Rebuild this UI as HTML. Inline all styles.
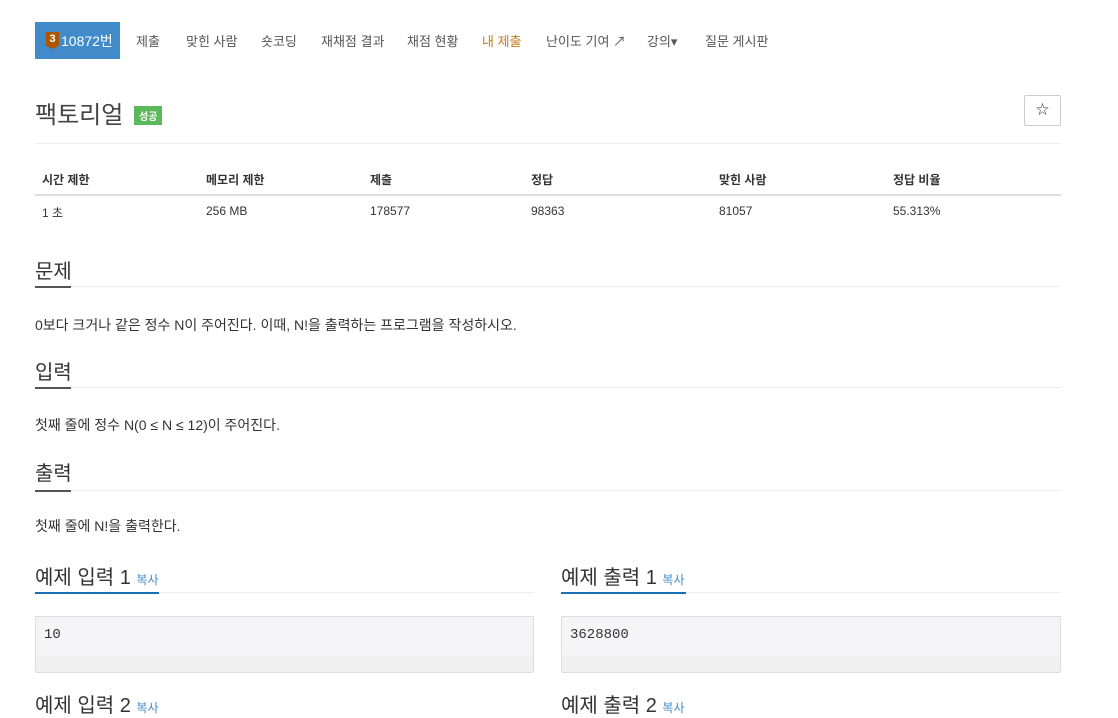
<!DOCTYPE html>
<html><head><meta charset="utf-8"><style>
*{margin:0;padding:0;box-sizing:border-box}
body{width:1118px;height:702px;overflow:hidden;background:#fff;font-family:"Liberation Sans","Noto Sans CJK KR",sans-serif;color:#333;font-size:14px;position:relative}
.a{position:absolute;white-space:nowrap}
.nav{font-size:13px;color:#555;top:31px}
.brand{position:absolute;left:35px;top:22px;width:85px;height:37px;background:#428bca;color:#fff;font-size:14px}
.badge{position:absolute;left:11px;top:10px;width:13px;height:17px;background:#ad5600;color:#fff;font-size:11px;font-weight:bold;text-align:center;line-height:14px;clip-path:polygon(0 0,100% 0,100% 80%,50% 100%,0 80%)}
.h{font-size:20px;color:#333}
.line{position:absolute;height:1px;background:#eee}
.ul{position:absolute;height:2px;background:#555}
.th{font-size:12px;font-weight:bold;top:171px}
.td{font-size:12px;top:204px}
.pre{position:absolute;top:616px;height:57px;background:#f5f5f7;border:1px solid #ddd;border-radius:2px}
.pre span{position:absolute;left:8px;top:10px;font-family:"Liberation Mono",monospace;font-size:14px;color:#333}
.pre i{position:absolute;left:0;right:0;bottom:0;height:17px;background:#f0f0f0}
</style></head><body>
<div class="brand"><div class="badge">3</div><span class="a" style="left:26px;top:9px">10872번</span></div>
<span class="a nav" style="left:136px">제출</span>
<span class="a nav" style="left:186px">맞힌 사람</span>
<span class="a nav" style="left:261px">숏코딩</span>
<span class="a nav" style="left:321px">재채점 결과</span>
<span class="a nav" style="left:407px">채점 현황</span>
<span class="a nav" style="left:482px;color:#c47a1b">내 제출</span>
<span class="a nav" style="left:546px">난이도 기여 ↗</span>
<span class="a nav" style="left:647px">강의▾</span>
<span class="a nav" style="left:705px">질문 게시판</span>
<span class="a" style="left:35px;top:95px;font-size:24px;color:#444">팩토리얼</span>
<span class="a" style="left:134px;top:106px;background:#5cb85c;color:#fff;font-size:10px;padding:2px 5px;font-weight:bold">성공</span>
<div class="a" style="left:1024px;top:95px;width:37px;height:31px;border:1px solid #ccc;border-radius:2px;text-align:center;line-height:28px;font-size:13px">☆</div>
<div class="line" style="left:35px;width:1026px;top:143px"></div>
<span class="a th" style="left:42px">시간 제한</span><span class="a th" style="left:206px">메모리 제한</span><span class="a th" style="left:370px">제출</span><span class="a th" style="left:531px">정답</span><span class="a th" style="left:719px">맞힌 사람</span><span class="a th" style="left:893px">정답 비율</span>
<div class="line" style="left:35px;width:1026px;top:194px;height:2px;background:#ddd"></div>
<span class="a td" style="left:42px">1 초</span><span class="a td" style="left:206px">256 MB</span><span class="a td" style="left:370px">178577</span><span class="a td" style="left:531px">98363</span><span class="a td" style="left:719px">81057</span><span class="a td" style="left:893px">55.313%</span>
<span class="a h" style="left:35px;top:255px">문제</span><div class="line" style="left:35px;width:1026px;top:286px"></div><div class="ul" style="left:35px;width:36px;top:286px"></div>
<span class="a" style="left:35px;top:315px">0보다 크거나 같은 정수 N이 주어진다. 이때, N!을 출력하는 프로그램을 작성하시오.</span>
<span class="a h" style="left:35px;top:356px">입력</span><div class="line" style="left:35px;width:1026px;top:387px"></div><div class="ul" style="left:35px;width:36px;top:387px"></div>
<span class="a" style="left:35px;top:415px">첫째 줄에 정수 N(0 ≤ N ≤ 12)이 주어진다.</span>
<span class="a h" style="left:35px;top:457px">출력</span><div class="line" style="left:35px;width:1026px;top:490px"></div><div class="ul" style="left:35px;width:36px;top:490px"></div>
<span class="a" style="left:35px;top:516px">첫째 줄에 N!을 출력한다.</span>
<span class="a h" style="left:35px;top:561px">예제 입력 1 <span style="font-size:12px;color:#428bca">복사</span></span>
<div class="line" style="left:35px;width:499px;top:592px"></div><div class="ul" style="left:35px;width:124px;top:592px;background:#1a6fb5"></div>
<span class="a h" style="left:561px;top:561px">예제 출력 1 <span style="font-size:12px;color:#428bca">복사</span></span>
<div class="line" style="left:561px;width:500px;top:592px"></div><div class="ul" style="left:561px;width:125px;top:592px;background:#1a6fb5"></div>
<div class="pre" style="left:35px;width:499px"><span>10</span><i></i></div>
<div class="pre" style="left:561px;width:500px"><span>3628800</span><i></i></div>
<span class="a h" style="left:35px;top:689px">예제 입력 2 <span style="font-size:12px;color:#428bca">복사</span></span>
<span class="a h" style="left:561px;top:689px">예제 출력 2 <span style="font-size:12px;color:#428bca">복사</span></span>
</body></html>
